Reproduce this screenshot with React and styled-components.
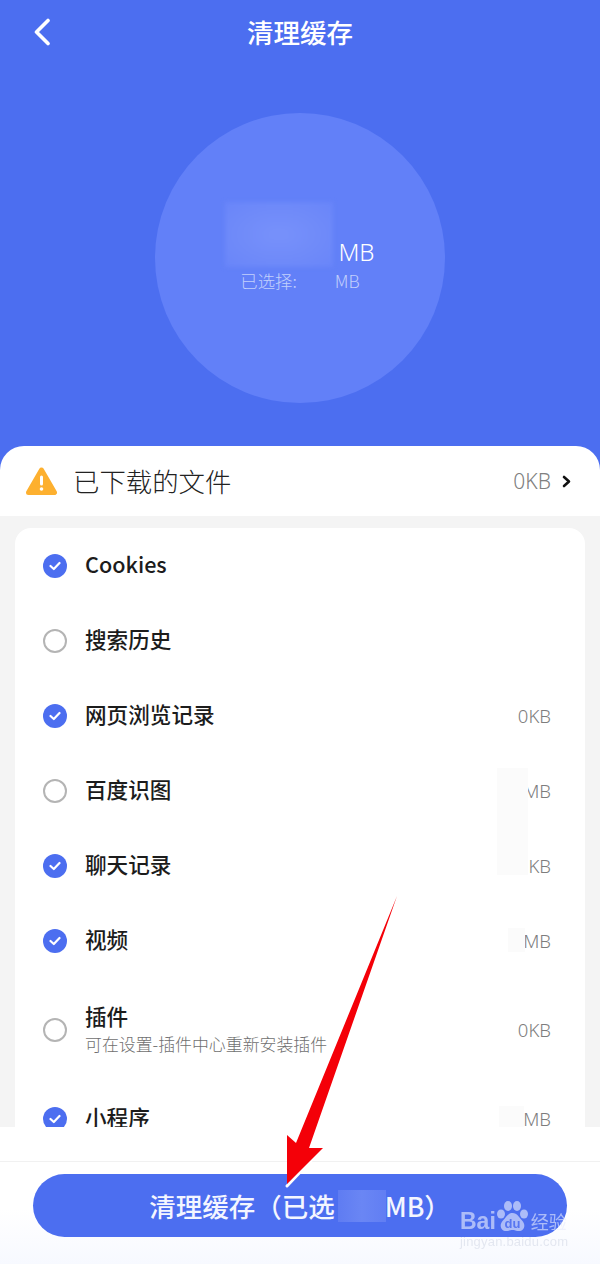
import React from 'react';
import styled, { createGlobalStyle } from 'styled-components';

const GlobalStyle = createGlobalStyle`
  html, body {
    margin: 0;
    padding: 0;
    background: #ffffff;
  }
`;

const Page = styled.div`
  position: relative;
  display: flex;
  flex-direction: column;
  width: 600px;
  height: 1264px;
  overflow: hidden;
  background: #4c6ef0;
  font-family: "Noto Sans CJK SC", "Noto Sans", sans-serif;
`;

const Hero = styled.header`
  flex: none;
  height: 446px;
  box-sizing: border-box;
  display: flex;
  flex-direction: column;
  align-items: center;
`;

const NavBar = styled.div`
  width: 100%;
  height: 64px;
  box-sizing: border-box;
  padding-left: 33px;
  display: grid;
  grid-template-columns: 100px 1fr 133px;
  align-items: center;
`;

const BackIcon = styled.svg`
  width: 18px;
  height: 28px;
  fill: none;
  stroke: #ffffff;
  stroke-width: 3.6;
  stroke-linecap: round;
  stroke-linejoin: round;
`;

const Title = styled.h1`
  margin: 0;
  text-align: center;
  font-size: 26.5px;
  line-height: 62px;
  font-weight: 500;
  color: #ffffff;
`;

const Circle = styled.div`
  margin-top: 49px;
  width: 290px;
  height: 290px;
  box-sizing: border-box;
  padding-top: 89px;
  border-radius: 50%;
  background: #6280f8;
  display: flex;
  flex-direction: column;
  align-items: center;
`;

const TotalLine = styled.div`
  display: flex;
  align-items: flex-end;
  gap: 5px;
  height: 65px;
`;

const TotalBlur = styled.div`
  width: 108px;
  height: 65px;
  background: radial-gradient(ellipse at center, #7690fa 10%, #6985f9 100%);
  filter: blur(2px);
`;

const TotalUnit = styled.span`
  font-family: "Noto Sans", sans-serif;
  font-size: 24px;
  line-height: 30px;
  font-weight: 300;
  color: #ffffff;
`;

const SelectedLine = styled.div`
  margin-top: 2px;
  display: flex;
  align-items: center;
  gap: 38px;
  font-size: 17.4px;
  line-height: 24px;
  font-weight: 300;
  color: #c3d0fc;
`;

const Sheet = styled.main`
  flex: 1;
  min-height: 0;
  display: flex;
  flex-direction: column;
  background: #ffffff;
  border-radius: 24px 24px 0 0;
`;

const DownloadRow = styled.div`
  flex: none;
  height: 70px;
  box-sizing: border-box;
  padding: 0 29px 0 26px;
  display: flex;
  align-items: center;
`;

const WarnIcon = styled.svg`
  flex: none;
  width: 31px;
  height: 29px;
  margin-right: 16px;
`;

const DownloadLabel = styled.span`
  flex: 1;
  font-size: 26.4px;
  line-height: 36px;
  font-weight: 300;
  color: #222222;
`;

const DownloadSize = styled.span`
  font-family: "Noto Sans", sans-serif;
  font-size: 21px;
  font-weight: 300;
  color: #808080;
  margin-right: 11px;
`;

const ForwardIcon = styled.svg`
  width: 9px;
  height: 13px;
  fill: none;
  stroke: #111111;
  stroke-width: 2.6;
  stroke-linecap: round;
  stroke-linejoin: round;
`;

const ListArea = styled.div`
  flex: 1;
  min-height: 0;
  overflow: hidden;
  box-sizing: border-box;
  padding: 12px 15px 0;
  background: #f4f4f4;
`;

const Card = styled.div`
  background: #ffffff;
  border-radius: 16px;
`;

const Row = styled.div`
  position: relative;
  height: ${(p) => (p.$tall ? 103 : 75)}px;
  box-sizing: border-box;
  padding: 0 34px 0 28px;
  display: flex;
  align-items: center;
`;

const Tick = styled.span`
  flex: none;
  width: 24px;
  height: 24px;
  box-sizing: border-box;
  border-radius: 50%;
  margin-right: 18px;
  display: flex;
  align-items: center;
  justify-content: center;
  background: ${(p) => (p.$checked ? '#4c6ef0' : '#ffffff')};
  border: ${(p) => (p.$checked ? 'none' : '2px solid #b4b4b4')};

  svg {
    width: 12px;
    height: 10px;
    fill: none;
    stroke: #ffffff;
    stroke-width: 2.2;
    stroke-linecap: round;
    stroke-linejoin: round;
  }
`;

const RowText = styled.div`
  flex: 1;
  min-width: 0;
  padding-bottom: 3px;
`;

const RowLabel = styled.div`
  font-size: 21.6px;
  line-height: 30px;
  font-weight: 500;
  color: #1c1c1c;
`;

const RowHint = styled.div`
  margin-top: 2px;
  font-size: 16.9px;
  line-height: 22px;
  font-weight: 300;
  color: #6f6f6f;
  white-space: nowrap;
`;

const RowValue = styled.span`
  font-family: "Noto Sans", sans-serif;
  font-size: 18.5px;
  font-weight: 300;
  color: #7d7d7d;
`;

// mosaic left over from the numbers being blanked out in the screenshot
const Smudge = styled.span`
  position: absolute;
  top: ${(p) => p.$top}px;
  right: ${(p) => p.$right}px;
  width: ${(p) => p.$w}px;
  height: ${(p) => p.$h}px;
  background: #fbfbfb;
`;

const Footer = styled.footer`
  flex: none;
  height: 137px;
  background: linear-gradient(180deg, #ffffff 60%, #f7f9ff 100%);
`;

const FooterGap = styled.div`
  height: 34px;
  border-bottom: 1px solid #f1f1f1;
`;

const CleanButton = styled.button`
  display: flex;
  align-items: center;
  justify-content: center;
  margin: 12px 33px 0;
  width: 534px;
  height: 63px;
  padding: 0;
  border: none;
  border-radius: 32px;
  background: #4c6ef0;
  color: #f4f6ff;
  font-family: inherit;
  font-size: 26.5px;
  font-weight: 500;
`;

const ButtonBlur = styled.span`
  width: 48px;
  height: 32px;
  margin: 0 -1px 0 3px;
  background: linear-gradient(90deg, #5f7cf2, #6a86f4 50%, #617ef3);
`;

const ArrowOverlay = styled.svg`
  position: absolute;
  left: 0;
  top: 0;
  width: 600px;
  height: 1264px;
  pointer-events: none;
`;

const Watermark = styled.div`
  position: absolute;
  left: 460px;
  top: 1199px;
  width: 108px;
  opacity: 0.62;
  color: #ffffff;
  pointer-events: none;
`;

const MarkTop = styled.div`
  display: flex;
  align-items: flex-end;
  height: 35px;
`;

const MarkBai = styled.span`
  font-family: "Liberation Sans", sans-serif;
  font-size: 23px;
  line-height: 26px;
  font-weight: 700;
  color: #e8ecfd;
`;

const MarkPaw = styled.svg`
  width: 33px;
  height: 34px;
  flex: none;
`;

const MarkName = styled.span`
  font-size: 18px;
  line-height: 25px;
  color: #e8ecfd;
  margin-left: 2px;
  white-space: nowrap;
`;

const MarkUrl = styled.div`
  font-family: "Liberation Sans", sans-serif;
  font-size: 13px;
  line-height: 15px;
  letter-spacing: 0.2px;
  color: #d6dbe8;
  white-space: nowrap;
`;

const rows = [
  { label: 'Cookies', checked: true },
  { label: '搜索历史', checked: false },
  { label: '网页浏览记录', checked: true, value: '0KB' },
  { label: '百度识图', checked: false, value: 'MB', smudge: { $top: 15, $right: 57, $w: 31, $h: 47 } },
  { label: '聊天记录', checked: true, value: 'KB', smudge: { $top: -13, $right: 57, $w: 31, $h: 60 } },
  { label: '视频', checked: true, value: 'MB', smudge: { $top: 25, $right: 60, $w: 17, $h: 24 } },
  { label: '插件', checked: false, value: '0KB', hint: '可在设置-插件中心重新安装插件' },
  { label: '小程序', checked: true, value: 'MB', smudge: { $top: 25, $right: 61, $w: 25, $h: 24 } },
];

const App = () => {
  return (
    <Page>
      <GlobalStyle />

      {/* Blue top area */}
      <Hero>
        <NavBar>
          <BackIcon viewBox="0 0 18 28">
            <path d="M15 2.500 3.500 14 15 25.500" />
          </BackIcon>
          <Title>清理缓存</Title>
        </NavBar>
        <Circle>
          <TotalLine>
            <TotalBlur />
            <TotalUnit>MB</TotalUnit>
          </TotalLine>
          <SelectedLine>
            <span>已选择:</span>
            <span>MB</span>
          </SelectedLine>
        </Circle>
      </Hero>

      <Sheet>
        <DownloadRow>
          <WarnIcon viewBox="0 0 31 29">
            <path
              d="M15.500 3 28.500 25.500H2.500Z"
              fill="#fdb02f"
              stroke="#fdb02f"
              strokeWidth="5"
              strokeLinejoin="round"
            />
            <rect x="14" y="8.500" width="3" height="10" rx="1.500" fill="#ffffff" />
            <circle cx="15.500" cy="22" r="1.800" fill="#ffffff" />
          </WarnIcon>
          <DownloadLabel>已下载的文件</DownloadLabel>
          <DownloadSize>0KB</DownloadSize>
          <ForwardIcon viewBox="0 0 9 13">
            <path d="M2 2 7 6.500 2 11" />
          </ForwardIcon>
        </DownloadRow>

        <ListArea>
          <Card>
            {rows.map((row) => (
              <Row key={row.label} $tall={!!row.hint}>
                <Tick $checked={row.checked}>
                  {row.checked && (
                    <svg viewBox="0 0 12 10">
                      <path d="M1.500 5 4.800 8 10.500 2" />
                    </svg>
                  )}
                </Tick>
                <RowText>
                  <RowLabel>{row.label}</RowLabel>
                  {row.hint && <RowHint>{row.hint}</RowHint>}
                </RowText>
                {row.value && <RowValue>{row.value}</RowValue>}
                {row.smudge && <Smudge {...row.smudge} />}
              </Row>
            ))}
          </Card>
        </ListArea>

        <Footer>
          <FooterGap />
          <CleanButton>
            清理缓存（已选
            <ButtonBlur />
            MB）
          </CleanButton>
        </Footer>
      </Sheet>

      {/* Annotation arrow on top of the screenshot */}
      <ArrowOverlay viewBox="0 0 600 1264">
        <path d="M323 1148 287 1186" stroke="#ffffff" strokeWidth="3" strokeLinecap="round" />
        <polygon
          points="397,896 309,1148 323,1148 287,1184 287,1135 296,1143"
          fill="#f40008"
        />
      </ArrowOverlay>

      <Watermark>
        <MarkTop>
          <MarkBai>Bai</MarkBai>
          <MarkPaw viewBox="0 0 33 34">
            <g fill="#e8ecfd">
              <ellipse cx="5" cy="14" rx="4" ry="4.600" />
              <ellipse cx="12" cy="6" rx="4" ry="5" />
              <ellipse cx="21" cy="6" rx="4" ry="5" />
              <ellipse cx="28" cy="14" rx="4" ry="4.600" />
              <path d="M16.500 13c5 0 6 4 10 8 4 5 1 11-5 10-2-.4-3.500-1-5-1s-3 .6-5 1c-6 1-9-5-5-10 4-4 5-8 10-8Z" />
            </g>
            <text
              x="16.500"
              y="28"
              textAnchor="middle"
              fontFamily="Liberation Sans, sans-serif"
              fontSize="13"
              fontWeight="700"
              fill="#5f7cf2"
            >
              du
            </text>
          </MarkPaw>
          <MarkName>经验</MarkName>
        </MarkTop>
        <MarkUrl>jingyan.baidu.com</MarkUrl>
      </Watermark>
    </Page>
  );
};

export default App;
